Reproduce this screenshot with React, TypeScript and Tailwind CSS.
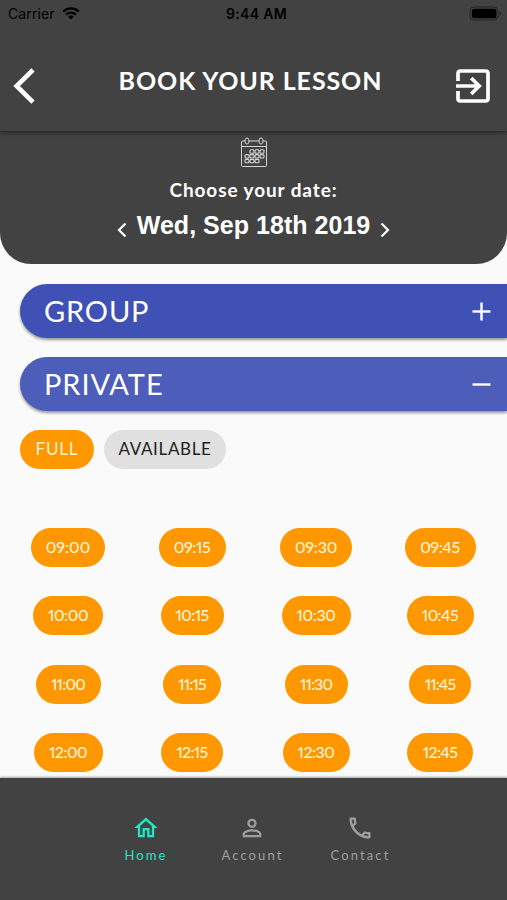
import React, { useState } from 'react';
import { MdOutlineHome, MdPersonOutline, MdOutlinePhone } from 'react-icons/md';
import { clsx } from 'clsx';

type Slot = { time: string; width: string };

const slots: Slot[] = [
  { time: '09:00', width: 'w-[74px] tracking-[0px]' },
  { time: '09:15', width: 'w-[67px] tracking-[-0.4px]' },
  { time: '09:30', width: 'w-[72px] tracking-[-0.2px]' },
  { time: '09:45', width: 'w-[71px] tracking-[-0.4px]' },
  { time: '10:00', width: 'w-[70px] tracking-[-0.4px]' },
  { time: '10:15', width: 'w-[63px] tracking-[-0.6px]' },
  { time: '10:30', width: 'w-[69px] tracking-[-0.4px]' },
  { time: '10:45', width: 'w-[67px] tracking-[-0.6px]' },
  { time: '11:00', width: 'w-[65px] tracking-[-0.8px]' },
  { time: '11:15', width: 'w-[58px] tracking-[-0.9px]' },
  { time: '11:30', width: 'w-[63px] tracking-[-0.9px]' },
  { time: '11:45', width: 'w-[62px] tracking-[-0.9px]' },
  { time: '12:00', width: 'w-[69px] tracking-[-0.5px]' },
  { time: '12:15', width: 'w-[62px] tracking-[-0.7px]' },
  { time: '12:30', width: 'w-[67px] tracking-[-0.5px]' },
  { time: '12:45', width: 'w-[66px] tracking-[-0.7px]' },
];

const tabs = [
  { label: 'Home', icon: MdOutlineHome, width: 'w-[105px]' },
  { label: 'Account', icon: MdPersonOutline, width: 'w-[108px]' },
  { label: 'Contact', icon: MdOutlinePhone, width: 'w-[108px]' },
];

const StatusBar: React.FC = () => (
  <div className="grid h-[27px] grid-cols-3 items-center pl-[8px] pr-[5px] font-['Inter','Liberation_Sans',sans-serif] text-[14px] text-black">
    <div className="flex items-center gap-[7px]">
      <span className="tracking-[0.1px]">Carrier</span>
      <svg width="18" height="13" viewBox="0 0 18 13" fill="none" stroke="black" strokeWidth="2.2">
        <path d="M1.2 4.6a11.2 11.2 0 0 1 15.6 0" />
        <path d="M4 7.6a7.2 7.2 0 0 1 10 0" />
        <path d="M9 12.4 6.3 9.7a3.8 3.8 0 0 1 5.4 0z" fill="black" stroke="none" />
      </svg>
    </div>
    <span className="pl-[3px] text-center font-semibold tracking-[0.35px]">9:44 AM</span>
    <svg className="justify-self-end" width="33" height="15" viewBox="0 0 33 15">
      <rect x="1" y="1" width="28" height="13" rx="4" fill="none" stroke="#242424" />
      <rect x="2.8" y="2.8" width="24.6" height="9.4" rx="2.2" fill="black" />
      <path d="M30.5 5.2v4.6c1.6-.7 1.6-3.9 0-4.6z" fill="#242424" />
    </svg>
  </div>
);

// spiral-bound month page with a block of day cells
const CalendarIcon: React.FC = () => (
  <svg width="28" height="31" viewBox="0 0 28 31" fill="none" stroke="#d5d5d5" strokeWidth="1">
    <path d="M5 4H2.5Q1.5 4 1.5 5v23.5q0 1 1 1h23q1 0 1-1V5q0-1-1-1H23M9 4h10M1.5 9.5h25" />
    <rect x="5.2" y="1" width="3.6" height="6" rx="1.8" />
    <rect x="19.2" y="1" width="3.6" height="6" rx="1.8" />
    <g strokeWidth="1.1">
      <rect x="10" y="12.8" width="4" height="3.4" rx="1" />
      <rect x="15" y="12.8" width="4" height="3.4" rx="1" />
      <rect x="20" y="12.8" width="4" height="3.4" rx="1" />
      <rect x="5" y="17.6" width="4" height="3.4" rx="1" />
      <rect x="10" y="17.6" width="4" height="3.4" rx="1" />
      <rect x="15" y="17.6" width="4" height="3.4" rx="1" />
      <rect x="20" y="17.6" width="4" height="3.4" rx="1" />
      <rect x="5" y="22.4" width="4" height="3.4" rx="1" />
      <rect x="10" y="22.4" width="4" height="3.4" rx="1" />
      <rect x="15" y="22.4" width="4" height="3.4" rx="1" />
    </g>
  </svg>
);

const Section: React.FC<{ title: string; open: boolean; onClick: () => void }> = ({ title, open, onClick }) => (
  <button
    onClick={onClick}
    className={clsx(
      'ml-5 flex h-[54px] items-center justify-between rounded-l-full pl-6 pr-[16px] text-white shadow-[0_2px_3px_rgba(0,0,0,0.4)]',
      open ? 'bg-[#4c5dba]' : 'bg-[#3f51b5]'
    )}
  >
    <span className={clsx('-mt-[2px] text-[29px] leading-none', open ? 'tracking-[0.9px]' : 'tracking-[0.85px]')}>{title}</span>
    <svg width="19" height="19" viewBox="0 0 19 19" stroke="white" strokeWidth="2.4" fill="none">
      <path d="M0.5 9.5h18" />
      {!open && <path d="M9.5 0.5v18" />}
    </svg>
  </button>
);

export default function App() {
  const [openSection, setOpenSection] = useState('PRIVATE');
  const [activeTab, setActiveTab] = useState('Home');

  return (
    <div className="flex h-[900px] w-[507px] flex-col overflow-hidden bg-[#fafafa] font-['Lato','Liberation_Sans',sans-serif]">
      <header className="relative z-10 h-[131px] shrink-0 bg-[#424242] shadow-[0_1px_5px_rgba(0,0,0,0.55)]">
        <StatusBar />
        <div className="flex items-start justify-between pl-[13px] pr-[17px] pt-[40px]">
          <button aria-label="Back">
            <svg width="22" height="38" viewBox="0 0 22 38" fill="none" stroke="white" strokeWidth="4.6">
              <path d="M20 2.8 3.6 19 20 35.2" />
            </svg>
          </button>
          <h1 className="-mt-[1px] pl-[10px] text-[25px] font-bold leading-[28px] tracking-[0.9px] text-white">BOOK YOUR LESSON</h1>
          <button aria-label="Log out" className="pt-[2px]">
            <svg width="34" height="34" viewBox="0 0 34 34" fill="none" stroke="white" strokeWidth="3.7">
              <path d="M2 12V4.5Q2 2 4.5 2h25Q32 2 32 4.5v25Q32 32 29.5 32h-25Q2 32 2 29.5V22" />
              <path d="M0 17h23M15.2 9l8 8-8 8" />
            </svg>
          </button>
        </div>
      </header>

      <section className="flex h-[133px] shrink-0 flex-col items-center rounded-b-[31px] bg-[#424242] pt-[6px] text-white">
        <CalendarIcon />
        <p className="mt-[10px] text-[19px] font-bold leading-[24px] tracking-[0.9px]">Choose your date:</p>
        <div className="mt-[7px] flex items-center">
          <svg className="mt-[10px]" width="10" height="16" viewBox="0 0 10 16" fill="none" stroke="white" strokeWidth="2.2">
            <path d="M8.5 1.5 2 8l6.5 6.5" />
          </svg>
          <span className="mx-[9.5px] font-['Liberation_Sans',Arial,sans-serif] text-[25px] font-bold leading-[32px] tracking-[0.03px]">
            Wed, Sep 18th 2019
          </span>
          <svg className="mt-[10px]" width="10" height="16" viewBox="0 0 10 16" fill="none" stroke="white" strokeWidth="2.2">
            <path d="M1.5 1.5 8 8l-6.5 6.5" />
          </svg>
        </div>
      </section>

      <main className="flex min-h-0 flex-1 flex-col overflow-hidden">
        <div className="flex shrink-0 flex-col gap-[19px] pt-[20px]">
          {['GROUP', 'PRIVATE'].map((name) => (
            <Section key={name} title={name} open={openSection === name} onClick={() => setOpenSection(name)} />
          ))}
        </div>

        <div className="mt-[19px] flex shrink-0 gap-[10px] pl-5 text-[17px] leading-[20px]">
          <span className="flex h-[39px] w-[74px] justify-center rounded-full bg-[#ff9800] pt-[9px] tracking-[0.8px] text-[#fff3d6]">FULL</span>
          <span className="flex h-[39px] w-[122px] justify-center rounded-full bg-[#e0e0e0] pt-[9px] tracking-[0.65px] text-[#222]">AVAILABLE</span>
        </div>

        <div className="mt-[59px] grid shrink-0 grid-cols-4 gap-y-[29.4px] pl-[6px] pr-[5px]">
          {slots.map((slot) => (
            <div key={slot.time} className="flex justify-center">
              <button
                className={clsx(
                  'flex h-[39px] justify-center whitespace-nowrap rounded-full bg-[#ff9800] pt-[9px] text-[16px] font-medium leading-[20px] text-[#fff3d6] proportional-nums',
                  slot.width
                )}
              >
                {slot.time}
              </button>
            </div>
          ))}
        </div>
      </main>

      <nav className="flex h-[122px] shrink-0 justify-center bg-[#424242] pt-[36px] shadow-[0_-1px_2px_rgba(0,0,0,0.35)]">
        {tabs.map(({ label, icon: Icon, width }) => (
          <button
            key={label}
            onClick={() => setActiveTab(label)}
            className={clsx('flex flex-col items-center', width, activeTab === label ? 'text-[#1de9c6]' : 'text-[#9e9e9e]')}
          >
            <Icon size={28} />
            <span className="mt-[5px] pl-[1px] text-[13px] leading-[16px] tracking-[2.1px]">{label}</span>
          </button>
        ))}
      </nav>
    </div>
  );
}
